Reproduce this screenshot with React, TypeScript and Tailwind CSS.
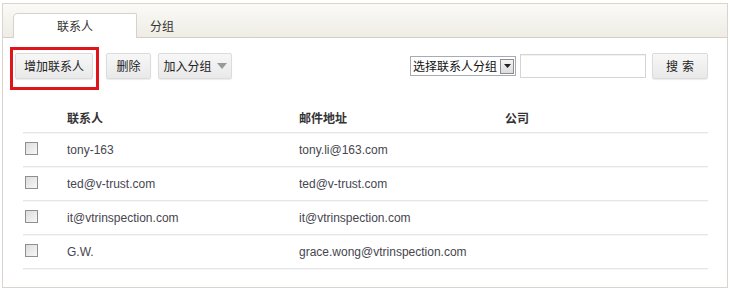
import { useState } from "react"

const contacts = [
    { name: "tony-163", email: "tony.li@163.com", company: "" },
    { name: "ted@v-trust.com", email: "ted@v-trust.com", company: "" },
    { name: "it@vtrinspection.com", email: "it@vtrinspection.com", company: "" },
    { name: "G.W.", email: "grace.wong@vtrinspection.com", company: "" },
];

const cjk = "font-['Noto_Sans_CJK_SC',sans-serif]";
const latin = "font-['Liberation_Sans','Noto_Sans_CJK_SC',sans-serif]";

const GrayButton = ({ children, className = "" }: { children: React.ReactNode; className?: string }) => (
    <button
        className={`h-[26px] flex items-center text-[12px] text-[#222] bg-gradient-to-b from-[#f7f7f7] to-[#e9e9e9] border border-[#dcdcdc] rounded-[2px] shadow-[0_1px_1px_rgba(0,0,0,0.08)] ${cjk} ${className}`}
    >
        {children}
    </button>
);

export default function App() {
    const [tab, setTab] = useState(0);
    const [checked, setChecked] = useState<boolean[]>(contacts.map(() => false));

    return (
        <div className="w-[730px] h-[290px] bg-white pt-[3px] pl-[2px]">
            <div className="w-[726px] h-[285px] border border-[#d9d5cc] bg-white flex flex-col">
                {/* tabs */}
                <div className="h-[34px] bg-gradient-to-b from-[#fbfaf7] to-[#efece5] border-b border-[#d3cfc6] flex items-end pl-[10px]">
                    {["联系人", "分组"].map((t, i) => (
                        <button
                            key={t}
                            onClick={() => setTab(i)}
                            className={`h-[25px] text-[12px] ${cjk} text-[#333] -mb-px ${
                                tab === i
                                    ? "w-[124px] bg-white border border-b-0 border-[#d6d2c9] rounded-tl-[5px] rounded-tr-[2px]"
                                    : "w-[50px]"
                            }`}
                        >
                            {t}
                        </button>
                    ))}
                </div>

                {/* toolbar */}
                <div className="flex items-center h-[26px] mt-[15px] pl-[12px] pr-[19px]">
                    <div className="relative">
                        <GrayButton className="px-[8px]">增加联系人</GrayButton>
                        <span className="absolute -top-[6px] -bottom-[11px] -left-[5px] -right-[6px] border-[3px] border-[#e0141b] pointer-events-none" />
                    </div>
                    <GrayButton className="ml-[13px] w-[45px] justify-center">删除</GrayButton>
                    <GrayButton className="ml-[7px] w-[74px] justify-center gap-[5px]">
                        加入分组
                        <svg width="10" height="6" viewBox="0 0 10 6">
                            <path d="M0 0 L10 0 L5 6 Z" fill="#999" />
                        </svg>
                    </GrayButton>

                    <div className="ml-auto flex items-center">
                        <div className={`h-[20px] flex items-center border border-[#a5acb5] bg-white pl-[2px] pr-[1px] text-[12px] text-[#111] ${cjk}`}>
                            <span className="mr-[3px]">选择联系人分组</span>
                            <span className="w-[14px] h-[15px] border border-[#8c8c8c] bg-gradient-to-b from-[#f4f4f4] to-[#dcdcdc] flex items-center justify-center">
                                <svg width="7" height="4" viewBox="0 0 7 4">
                                    <path d="M0 0 L7 0 L3.5 4 Z" fill="#222" />
                                </svg>
                            </span>
                        </div>
                        <input className="ml-[4px] w-[126px] h-[24px] border border-[#d5d5d5] bg-white shadow-[inset_0_1px_1px_rgba(0,0,0,0.06)] outline-none" />
                        <GrayButton className="ml-[6px] w-[56px] justify-center tracking-[4px] pl-[4px]">搜索</GrayButton>
                    </div>
                </div>

                {/* table */}
                <div className="mt-[25px] ml-[20px] w-[685px]">
                    <div className={`h-[29px] flex items-center text-[12px] font-bold text-[#333] ${cjk} border-b border-[#e6e6e6] shadow-[0_1px_0_#f6f6f6]`}>
                        <div className="w-[44px]" />
                        <div className="w-[232px]">联系人</div>
                        <div className="w-[206px]">邮件地址</div>
                        <div>公司</div>
                    </div>
                    {contacts.map((c, i) => (
                        <div
                            key={c.email}
                            className={`h-[34px] flex items-center text-[12px] text-[#46464f] ${latin} border-b border-[#e6e6e6] shadow-[0_1px_0_#f6f6f6]`}
                        >
                            <div className="w-[44px] pl-[2px] -mt-[3px] flex">
                                <input
                                    type="checkbox"
                                    checked={checked[i]}
                                    onChange={() => setChecked(checked.map((v, j) => (j === i ? !v : v)))}
                                    className="appearance-none w-[13px] h-[13px] border border-[#8f8f8f] bg-gradient-to-br from-[#dcdcdc] to-[#f8f8f8] checked:bg-[#6b8fd0] m-0"
                                />
                            </div>
                            <div className="w-[232px]">{c.name}</div>
                            <div className="w-[206px]">{c.email}</div>
                            <div>{c.company}</div>
                        </div>
                    ))}
                </div>
            </div>
        </div>
    )
}
